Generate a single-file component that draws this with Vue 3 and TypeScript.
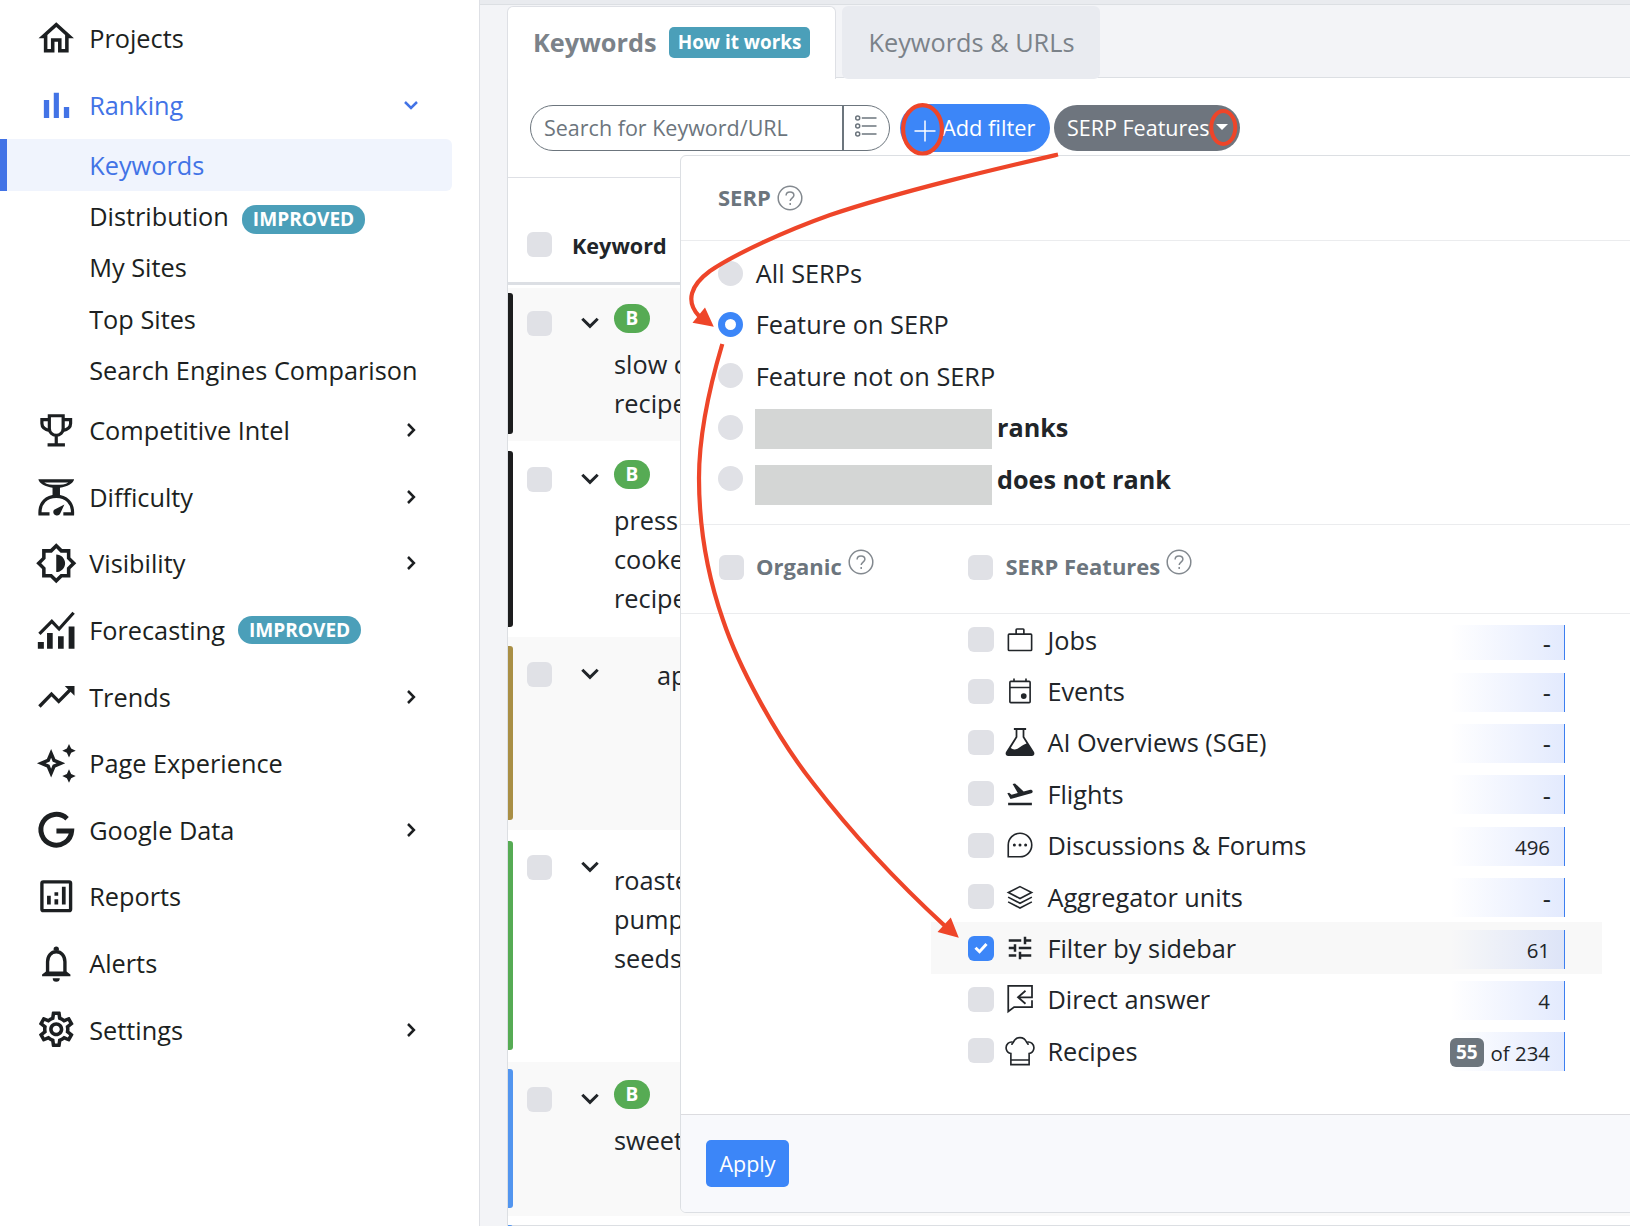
<script setup lang="ts">
interface NavItem {
  label: string
  icon: string
  arrow?: boolean
  badge?: string
}
interface Keyword {
  color: string
  height: number
  barTop: number
  barHeight: number
  checkTop: number
  textTop: number
  badge: boolean
  indent: number
  lines: string[]
}
interface Feature {
  label: string
  icon: string
  value: string
  part?: string
  checked?: boolean
}

const navTop: NavItem[] = [{ label: 'Projects', icon: 'home' }]
const subItems = [
  { label: 'Keywords', active: true, badge: '' },
  { label: 'Distribution', active: false, badge: 'IMPROVED' },
  { label: 'My Sites', active: false, badge: '' },
  { label: 'Top Sites', active: false, badge: '' },
  { label: 'Search Engines Comparison', active: false, badge: '' },
]
const navBottom: NavItem[] = [
  { label: 'Competitive Intel', icon: 'trophy', arrow: true },
  { label: 'Difficulty', icon: 'scale', arrow: true },
  { label: 'Visibility', icon: 'visibility', arrow: true },
  { label: 'Forecasting', icon: 'forecast', badge: 'IMPROVED' },
  { label: 'Trends', icon: 'trend', arrow: true },
  { label: 'Page Experience', icon: 'sparkle' },
  { label: 'Google Data', icon: 'google', arrow: true },
  { label: 'Reports', icon: 'report' },
  { label: 'Alerts', icon: 'bell' },
  { label: 'Settings', icon: 'gear', arrow: true },
]

// Each icon is a list of 24-unit shapes: filled paths and stroked paths.
const icons: Record<string, { fill?: string; stroke?: string; width?: number }> = {
  home: { fill: 'M12 5.69l5 4.5V18h-2v-6H9v6H7v-7.81l5-4.5M12 3L2 12h3v8h6v-6h2v6h6v-8h3L12 3z' },
  bars: { fill: 'M5 9h3v10.200H5zM10.600 5h2.900v14.200h-2.900zM16.300 13h3v6.200h-3z' },
  trophy: {
    stroke: 'M8.100 3.800h7.800v7.200a3.900 3.900 0 0 1-7.800 0zM8 6H3.900v2.200c0 2 1.700 3.500 4.600 4.100M16 6h4.100v2.200c0 2-1.700 3.500-4.600 4.100M12 15v5M7.100 20.300h9.800',
    width: 1.8,
  },
  scale: {
    fill: 'M1.900 1.800h20.200c-.4 2.300-4 4.200-8 4.900v4.700H9.900V6.700c-4-.7-7.600-2.600-8-4.900zM5.200 3.600c1.500 1 4 1.400 6.800 1.400s5.300-.4 6.800-1.400zM16.600 16.100l-2.300 5c-.5 1.200-1.600 1.500-2.600 1.100-1.400-.6-1.800-2-.9-3.100z',
    stroke: 'M8.200 21.400H2.800c-.3-6.300 3.700-9.900 9.200-9.900s9.500 3.600 9.200 9.900h-5.200',
    width: 1.8,
  },
  visibility: {
    fill: 'M20 8.690V4h-4.690L12 .69 8.690 4H4v4.690L.69 12 4 15.310V20h4.690L12 23.310 15.310 20H20v-4.690L23.310 12 20 8.690zm-2 5.790V18h-3.520L12 20.480 9.520 18H6v-3.520L3.520 12 6 9.520V6h3.520L12 3.520 14.480 6H18v3.520L20.480 12 18 14.480zM12 7v10c2.760 0 5-2.240 5-5s-2.240-5-5-5z',
  },
  forecast: {
    fill: 'M1.600 18.600H5v3.900H1.600zM6.800 13.500H10v9H6.800zM13 15.400h3.200v7.100H13zM19 9.900h3.300v12.600H19z',
    stroke: 'M2.500 14l7-7 4.100 4.300 8.200-9.200',
    width: 1.8,
  },
  trend: {
    fill: 'M16.800 6.200h5.500v5.500z',
    stroke: 'M2.500 17.800l6.800-7 4.100 4.100 7.200-7.300',
    width: 1.9,
  },
  sparkle: {
    fill: 'M9.100 4l2.400 5.600L17.100 12l-5.600 2.400L9.100 20l-2.400-5.600L1.100 12l5.600-2.400zM9.100 8.900L8.200 11.100 6 12l2.200.9.9 2.200.9-2.200 2.200-.9-2.200-.9zM19.200 1.100l1.200 2.600 2.600 1.200-2.600 1.200-1.200 2.600-1.200-2.600-2.600-1.200 2.600-1.200zM19.200 15.400l1.200 2.600 2.600 1.200-2.600 1.200-1.200 2.600-1.200-2.600-2.600-1.200 2.600-1.200z',
  },
  google: { stroke: 'M18.100 5.500A8.700 8.700 0 1 0 20.700 12.400H12.100', width: 2.8 },
  report: {
    fill: 'M6.800 11.700h2.100v5H6.800zM11 9.800h2.100v1.900H11zM11 13.700h2.100v3H11zM15.200 6.600h2.100v10.100h-2.100z',
    stroke: 'M4.700 3.900h14.600q.8 0 .8.8v14.600q0 .8-.8.8H4.700q-.8 0-.8-.8V4.700q0-.8.8-.8z',
    width: 1.9,
  },
  bell: {
    fill: 'M10.500 4.600V4a1.500 1.500 0 0 1 3 0v.8zM4 18.400l2.200-1.800h11.600l2.200 1.800v1H4zM10 20.500h4a2 2 0 0 1-4 0z',
    stroke: 'M7.100 18v-6.800c0-3.400 2-5.700 4.900-5.700s4.900 2.300 4.900 5.700V18',
    width: 1.9,
  },
  gear: {
    fill: 'M19.430 12.980c.04-.32.07-.64.07-.98 0-.34-.03-.66-.07-.98l2.110-1.650c.19-.15.24-.42.12-.64l-2-3.460c-.09-.16-.26-.25-.44-.25-.06 0-.12.010-.17.030l-2.490 1c-.52-.4-1.080-.73-1.690-.98l-.38-2.650C14.460 2.180 14.250 2 14 2h-4c-.25 0-.46.18-.49.42l-.38 2.650c-.61.25-1.170.59-1.690.98l-2.490-1c-.06-.02-.12-.03-.18-.03-.17 0-.34.09-.43.25l-2 3.460c-.13.22-.07.49.12.64l2.110 1.650c-.04.32-.07.65-.07.98 0 .33.030.66.070.98l-2.110 1.650c-.19.15-.24.42-.12.64l2 3.460c.09.16.26.25.44.25.06 0 .12-.01.17-.03l2.490-1c.52.4 1.080.73 1.690.98l.38 2.650c.03.24.24.42.49.42h4c.25 0 .46-.18.49-.42l.38-2.650c.61-.25 1.170-.59 1.690-.98l2.490 1c.06.020.12.030.18.030.17 0 .34-.09.43-.25l2-3.460c.12-.22.070-.49-.12-.64l-2.110-1.650zm-1.980-1.710c.04.31.05.52.05.73 0 .21-.02.43-.05.73l-.14 1.130.89.7 1.080.84-.7 1.210-1.270-.51-1.040-.42-.9.68c-.43.32-.84.56-1.250.73l-1.060.43-.16 1.130-.2 1.350h-1.400l-.19-1.350-.16-1.130-1.060-.43c-.43-.18-.83-.41-1.230-.71l-.91-.7-1.060.43-1.270.51-.7-1.210 1.080-.84.89-.7-.14-1.130c-.03-.31-.05-.54-.05-.74s.02-.43.05-.73l.14-1.130-.89-.7-1.080-.84.7-1.210 1.270.51 1.040.42.9-.68c.43-.32.84-.56 1.250-.73l1.060-.43.16-1.130.2-1.350h1.390l.19 1.350.16 1.130 1.060.43c.43.18.83.41 1.230.71l.91.7 1.060-.43 1.270-.51.7 1.210-1.070.85-.89.7.14 1.130zM12 8c-2.210 0-4 1.790-4 4s1.790 4 4 4 4-1.790 4-4-1.790-4-4-4zm0 6c-1.100 0-2-.9-2-2s.9-2 2-2 2 .9 2 2-.9 2-2 2z',
  },
  jobs: {
    stroke: 'M3.400 7.300h17.200q.7 0 .7.7v11.700q0 .7-.7.7H3.400q-.7 0-.7-.7V8q0-.7.7-.7zM8.900 7.300V3.800q0-.6.6-.6h5q.6 0 .6.6v3.500',
    width: 1.3,
  },
  events: {
    fill: 'M15 13.700a2.300 2.300 0 1 1 0 4.600a2.300 2.300 0 1 1 0-4.600z',
    stroke: 'M4.700 4.300h14.600q.8 0 .8.8v15.400q0 .8-.8.8H4.700q-.8 0-.8-.8V5.100q0-.8.8-.8zM4 9.200h16M7.200 2v2.300M16.800 2v2.300',
    width: 1.3,
  },
  flask: {
    fill: 'M7.100.8h9.800v1.600h-1.400v5.400l7.500 11.800c1.100 1.900.3 3.600-1.500 3.600h-19c-1.800 0-2.600-1.700-1.500-3.600L8.500 7.800V2.400H7.100zM9.900 2.400v5.800l-5.300 8.600c1.500 1.300 3.400 1.500 5.400.5 2.600-1.300 4.500-3.500 7.200-4.200l-3.100-4.900V2.400z',
  },
  flight: {
    fill: 'M2.500 19h19v2h-19zm19.570-9.360c-.21-.8-1.040-1.280-1.840-1.060L14.920 10l-6.900-6.430-1.930.51 4.140 7.170-4.970 1.330-1.970-1.540-1.450.39 2.590 4.490L21 11.490c.81-.23 1.280-1.050 1.070-1.850z',
  },
  chat: {
    fill: 'M7.500 10.800a1.200 1.200 0 1 1 0 2.400a1.200 1.200 0 1 1 0-2.400zM12 10.800a1.200 1.200 0 1 1 0 2.400a1.200 1.200 0 1 1 0-2.400zM16.500 10.800a1.200 1.200 0 1 1 0 2.400a1.200 1.200 0 1 1 0-2.400z',
    stroke: 'M2.600 21.400V12A9.400 9.400 0 1 1 12 21.400z',
    width: 1.3,
  },
  layers: {
    stroke: 'M12 3.700l9.300 4.700-9.300 4.800-9.300-4.800zM2.500 12.100l9.500 4.900 9.500-4.900M2.500 15.900l9.500 4.900 9.500-4.900',
    width: 1.3,
  },
  tune: {
    fill: 'M3 17v2h6v-2H3zM3 5v2h10V5H3zm10 16v-2h8v-2h-8v-2h-2v6h2zM7 9v2H3v2h4v2h2V9H7zm14 4v-2H11v2h10zm-6-4h2V7h4V5h-4V3h-2v6z',
  },
  answer: {
    stroke: 'M21.600 13v5.500H7.300L2.600 22V1.500h19v9.100H10.800M16.400 5.400l-6 5.200 6 5.200',
    width: 1.4,
  },
  chef: {
    stroke: 'M4.700 22.900V14C.6 13.300-.2 8.300 2.400 5.900 3.700 4.700 5.300 4.600 6.700 5 7.700 2.700 9.600 1.300 12 1.300S16.300 2.700 17.300 5c1.400-.4 3-.3 4.300.9 2.600 2.400 1.800 7.400-2.300 8.100v8.900zM4.700 19.200h14.600M6.700 5c-.8.600-1.200 1.200-1.300 2.100M17.300 5c.8.600 1.200 1.200 1.300 2.100',
    width: 1.3,
  },
}

const keywords: Keyword[] = [
  { color: '#1c1d1e', height: 153, barTop: 5, barHeight: 141, checkTop: 23, textTop: 57, badge: true, indent: 0, lines: ['slow c', 'recipe'] },
  { color: '#1c1d1e', height: 196, barTop: 10, barHeight: 176, checkTop: 26, textTop: 60, badge: true, indent: 0, lines: ['pressu', 'cooke', 'recipe'] },
  { color: '#a98f45', height: 193, barTop: 9, barHeight: 174, checkTop: 25, textTop: 19, badge: false, indent: 43, lines: ['ap'] },
  { color: '#56ab54', height: 232, barTop: 11, barHeight: 209, checkTop: 25, textTop: 30.5, badge: false, indent: 0, lines: ['roaste', 'pump', 'seeds'] },
  { color: '#5295ef', height: 154, barTop: 7, barHeight: 139, checkTop: 25, textTop: 59, badge: true, indent: 0, lines: ['sweet'] },
  { color: '#5295ef', height: 154, barTop: 9, barHeight: 139, checkTop: 25, textTop: 59, badge: false, indent: 0, lines: [] },
]

const serpOptions = [
  { label: 'All SERPs', redacted: false, on: false, shift: 0 },
  { label: 'Feature on SERP', redacted: false, on: true, shift: 0 },
  { label: 'Feature not on SERP', redacted: false, on: false, shift: 0 },
  { label: 'ranks', redacted: true, on: false, shift: 4 },
  { label: 'does not rank', redacted: true, on: false, shift: 12 },
]

const features: Feature[] = [
  { label: 'Jobs', icon: 'jobs', value: '-' },
  { label: 'Events', icon: 'events', value: '-' },
  { label: 'AI Overviews (SGE)', icon: 'flask', value: '-' },
  { label: 'Flights', icon: 'flight', value: '-' },
  { label: 'Discussions & Forums', icon: 'chat', value: '496' },
  { label: 'Aggregator units', icon: 'layers', value: '-' },
  { label: 'Filter by sidebar', icon: 'tune', value: '61', checked: true },
  { label: 'Direct answer', icon: 'answer', value: '4' },
  { label: 'Recipes', icon: 'chef', value: 'of 234', part: '55' },
]
</script>

<template>
  <div class="app">
    <aside class="sidebar">
      <a v-for="n in navTop" :key="n.label" class="nav-item">
        <svg class="nav-icon" viewBox="0 0 24 24"><path :d="icons[n.icon].fill" fill="currentColor" /></svg>
        <span>{{ n.label }}</span>
      </a>
      <a class="nav-item open">
        <svg class="nav-icon" viewBox="0 0 24 24"><path :d="icons.bars.fill" fill="currentColor" /></svg>
        <span>Ranking</span>
        <svg class="nav-arrow" viewBox="0 0 18 18"><path d="M3 6l6 5.900L15 6" /></svg>
      </a>
      <div class="sub-list">
        <a v-for="s in subItems" :key="s.label" class="sub-item" :class="{ active: s.active }">
          <span>{{ s.label }}</span>
          <span v-if="s.badge" class="pill sub-pill">{{ s.badge }}</span>
        </a>
      </div>
      <a v-for="n in navBottom" :key="n.label" class="nav-item">
        <svg class="nav-icon" viewBox="0 0 24 24">
          <path v-if="icons[n.icon].fill" :d="icons[n.icon].fill" fill="currentColor" fill-rule="evenodd" />
          <path v-if="icons[n.icon].stroke" :d="icons[n.icon].stroke" fill="none" stroke="currentColor" :stroke-width="icons[n.icon].width" />
        </svg>
        <span>{{ n.label }}</span>
        <span v-if="n.badge" class="pill">{{ n.badge }}</span>
        <svg v-if="n.arrow" class="nav-arrow" viewBox="0 0 18 18"><path d="M6 3l5.900 6L6 15" /></svg>
      </a>
    </aside>

    <main class="main">
      <div class="strip"></div>
      <div class="tabs">
        <div class="tab current">
          <span>Keywords</span>
          <span class="how">How it works</span>
        </div>
        <div class="tab">Keywords &amp; URLs</div>
      </div>

      <section class="card">
        <div class="toolbar">
          <div class="search">
            <span class="search-text">Search for Keyword/URL</span>
            <span class="search-opts">
              <svg width="24" height="24" viewBox="0 0 24 24" fill="none" stroke="#6c757d" stroke-width="1.500">
                <circle cx="3.700" cy="4" r="2" /><circle cx="3.700" cy="12" r="2" /><circle cx="3.700" cy="20" r="2" />
                <path d="M7.800 4H22.500M7.800 12H22.500M7.800 20H22.500" />
              </svg>
            </span>
          </div>
          <button class="add">
            <svg width="22" height="22" viewBox="0 0 22 22"><path d="M11 .5v21M.5 11h21" stroke="#fff" stroke-width="1.500" /></svg>
            <span>Add filter</span>
          </button>
          <button class="serp-btn">
            <span>SERP Features</span>
            <i class="caret"></i>
          </button>
        </div>

        <div class="thead">
          <i class="check"></i>
          <span>Keyword</span>
        </div>
        <div
          v-for="(k, i) in keywords"
          :key="i"
          class="row"
          :class="{ odd: i % 2 === 0 && i < 5 }"
          :style="{ height: k.height + 'px' }"
        >
          <i class="bar" :style="{ background: k.color, height: k.barHeight + 'px', marginTop: k.barTop + 'px' }"></i>
          <i class="check" :style="{ marginTop: k.checkTop + 'px' }"></i>
          <svg class="chev" width="20" height="14" viewBox="0 0 20 14" :style="{ marginTop: k.checkTop + 4.500 + 'px' }">
            <path d="M2.300 2.800L10 10.300l7.700-7.500" fill="none" stroke="#212529" stroke-width="3" />
          </svg>
          <div class="words" :style="{ paddingTop: (k.badge ? k.checkTop - 7 : k.textTop) + 'px', paddingLeft: k.indent + 'px' }">
            <span v-if="k.badge" class="b-badge" :style="{ marginBottom: k.textTop - k.checkTop - 21.500 + 'px' }">B</span>
            <span v-for="l in k.lines" :key="l" class="line">{{ l }}</span>
          </div>
        </div>
      </section>
    </main>

    <section class="menu">
      <header class="menu-head">
        <span>SERP</span>
        <svg class="help" viewBox="0 0 26 26"><circle cx="13" cy="13" r="11.800" /><path d="M9.100 10.500c0-2.200 1.700-3.600 3.900-3.600s3.900 1.400 3.900 3.400c0 2.700-3.700 3-3.700 5.700M13.200 18.100v2" /></svg>
      </header>

      <div class="options">
        <div v-for="o in serpOptions" :key="o.label" class="option">
          <i class="radio" :class="{ on: o.on }"></i>
          <i v-if="o.redacted" class="redact" :style="{ marginTop: o.shift + 'px' }"></i>
          <b v-if="o.redacted">{{ o.label }}</b>
          <span v-else>{{ o.label }}</span>
        </div>
      </div>

      <div class="groups">
        <div class="group organic">
          <i class="check"></i>
          <span>Organic</span>
          <svg class="help" viewBox="0 0 26 26"><circle cx="13" cy="13" r="11.800" /><path d="M9.100 10.500c0-2.200 1.700-3.600 3.900-3.600s3.900 1.400 3.900 3.400c0 2.700-3.700 3-3.700 5.700M13.200 18.100v2" /></svg>
        </div>
        <div class="group">
          <i class="check"></i>
          <span>SERP Features</span>
          <svg class="help" viewBox="0 0 26 26"><circle cx="13" cy="13" r="11.800" /><path d="M9.100 10.500c0-2.200 1.700-3.600 3.900-3.600s3.900 1.400 3.900 3.400c0 2.700-3.700 3-3.700 5.700M13.200 18.100v2" /></svg>
        </div>
      </div>

      <div class="features">
        <div v-for="(f, i) in features" :key="f.label" class="feature" :class="{ selected: f.checked }">
          <i class="check" :class="{ on: f.checked }">
            <svg v-if="f.checked" width="14" height="12" viewBox="0 0 14 12"><path d="M1.500 5.800l4 3.900L12.500 2" fill="none" stroke="#fff" stroke-width="3" /></svg>
          </i>
          <svg class="f-icon" viewBox="0 0 24 24">
            <path v-if="icons[f.icon].fill" :d="icons[f.icon].fill" fill="currentColor" fill-rule="evenodd" />
            <path v-if="icons[f.icon].stroke" :d="icons[f.icon].stroke" fill="none" stroke="currentColor" :stroke-width="icons[f.icon].width" />
          </svg>
          <span class="f-label">{{ f.label }}</span>
          <span class="count" :class="{ first: i === 0, dash: f.value === '-' }">
            <b v-if="f.part" class="part">{{ f.part }}</b>
            <span>{{ f.value }}</span>
          </span>
        </div>
      </div>

      <footer class="menu-foot">
        <button class="apply">Apply</button>
      </footer>
    </section>

    <svg class="marks" viewBox="0 0 1630 1226" fill="none" stroke="#ee4529">
      <path d="M1058 154.500C1000 168 905 190 830 215C785 231 735 254 710 271C691 285 685 301 699 316" stroke-width="4.200" />
      <path d="M722.300 344C708 392 699 437 699 478C699 527 708 577 723 620C738 665 775 735 813 783C850 831 895 880 945 926" stroke-width="4.200" />
      <path d="M713.800 326.800L705 307.600L692.500 322.800zM958.800 937.800L950.800 917.500L937.500 932z" fill="#ee4529" stroke="none" />
      <ellipse cx="922.500" cy="129.300" rx="19.400" ry="24.200" stroke-width="4.200" />
      <ellipse cx="1223.300" cy="127.500" rx="12" ry="16.500" stroke-width="4" />
    </svg>
  </div>
</template>

<style>
html,
body {
  margin: 0;
  overflow: hidden;
}
</style>

<style scoped>
.app {
  position: relative;
  display: flex;
  width: 1630px;
  height: 1226px;
  overflow: hidden;
  background: #fff;
  color: #212529;
  font-family: 'Open Sans', 'Noto Sans', sans-serif;
  font-size: 25.3px;
  white-space: nowrap;
}
.app * {
  box-sizing: border-box;
}
i {
  display: block;
  flex: none;
}
button {
  border: 0;
  padding: 0;
  font: inherit;
  color: #fff;
}

/* Sidebar */
.sidebar {
  width: 480px;
  flex: none;
  padding-top: 4.8px;
  border-right: 1px solid #dee0e5;
  color: #1c1f21;
}
.nav-item {
  display: flex;
  align-items: center;
  height: 66.6px;
  padding: 0 59.5px 0 34.5px;
}
.nav-item.open {
  height: 67.6px;
  color: #4273e6;
}
.nav-icon {
  width: 42.5px;
  height: 42.5px;
  margin-right: 12.2px;
}
.nav-arrow {
  width: 18px;
  height: 18px;
  margin-left: auto;
  fill: none;
  stroke: currentColor;
  stroke-width: 2.5;
}
.sub-list {
  height: 258px;
}
.sub-item {
  display: flex;
  align-items: center;
  width: 452px;
  height: 51.3px;
  padding-left: 89.2px;
}
.sub-item.active {
  height: 52px;
  margin-bottom: -0.5px;
  padding-left: 82.2px;
  border-left: 7px solid #4273e6;
  border-radius: 0 6px 6px 0;
  background: #f0f4fd;
  color: #4273e6;
}
.pill {
  height: 28px;
  margin-left: 13px;
  padding: 0 11px;
  border-radius: 14px;
  background: #4b9fb9;
  color: #fff;
  font-size: 19.1px;
  font-weight: 700;
  line-height: 28px;
}
.sub-pill {
  height: 29px;
  margin-top: 6px;
}

/* Tabs and table */
.main {
  flex: 1;
  display: flex;
  flex-direction: column;
  background: #f3f4f7;
}
.strip {
  height: 5px;
  flex: none;
  background: #e9ebef;
  border-bottom: 1px solid #dcdfe3;
}
.tabs {
  display: flex;
  height: 72px;
  flex: none;
  margin-left: 27px;
  padding-top: 1px;
  color: #7b8289;
}
.tab {
  position: relative;
  display: flex;
  align-items: center;
  width: 258px;
  height: 73px;
  padding: 0 0 2px 26.5px;
  border-radius: 6px;
  background: #e9ebf0;
}
.tab.current {
  width: 329px;
  margin-right: 6px;
  padding-left: 25px;
  border: 1px solid #dee0e5;
  border-bottom: 0;
  border-radius: 6px 6px 0 0;
  background: #fff;
  font-weight: 700;
}
.how {
  height: 31px;
  margin-left: 12.2px;
  margin-top: 1px;
  padding: 0 9px;
  border-radius: 5px;
  background: #4b9fb9;
  color: #fff;
  font-size: 18.9px;
  line-height: 30px;
}
.card {
  flex: 1;
  margin-left: 27px;
  border: 1px solid #dcdfe3;
  border-right: 0;
  background: #fff;
  min-height: 0;
}
.toolbar {
  display: flex;
  align-items: center;
  height: 100px;
  padding-left: 22px;
  border-bottom: 1px solid #dee0e5;
  font-size: 21.6px;
}
.search {
  display: flex;
  width: 360px;
  height: 46px;
  border: 1px solid #6c757d;
  border-radius: 23px;
  color: #6c757d;
}
.search-text {
  width: 313px;
  padding-left: 13px;
  border-right: 2px solid #6c757d;
  font-size: 21.5px;
  line-height: 43px;
}
.search-opts {
  display: flex;
  align-items: center;
  padding: 0 0 3px 10px;
}
.add {
  display: flex;
  align-items: center;
  width: 150px;
  height: 48px;
  margin-left: 10px;
  padding: 0 0 1px 14px;
  border-radius: 24px;
  background: #3c86f8;
}
.add svg {
  margin: 7px 6px 0 0;
}
.add span {
  font-size: 21.8px;
}
.serp-btn {
  display: flex;
  align-items: center;
  width: 186px;
  height: 46px;
  margin-left: 4px;
  padding: 0 0 1px 13px;
  border-radius: 23px;
  background: #6e757e;
}
.serp-btn span {
  font-size: 21.5px;
}
.caret {
  margin: 0 0 0 6px;
  border: 6px solid transparent;
  border-top-color: #fff;
  border-bottom: 0;
}
.check {
  width: 25px;
  height: 25px;
  border-radius: 6px;
  background: #e0e1e6;
}
.thead {
  display: flex;
  align-items: center;
  height: 106.5px;
  padding: 31px 0 0 19px;
  border-bottom: 3px solid #dcdfe4;
  font-size: 21.6px;
  font-weight: 700;
}
.thead .check {
  margin: -1px 20px 0 0;
}
.row {
  display: flex;
  align-items: flex-start;
}
.thead + .row {
  margin-top: 3.5px;
}
.odd {
  background: #f9f9f9;
}
.bar {
  width: 5px;
  border-radius: 0 3px 3px 0;
}
.row .check {
  margin-left: 14px;
}
.chev {
  flex: none;
  margin-left: 28px;
}
.words {
  display: flex;
  flex-direction: column;
  align-items: flex-start;
  margin-left: 14px;
}
.b-badge {
  width: 36px;
  height: 28.500px;
  border-radius: 15px;
  background: #56ab54;
  color: #fff;
  font-size: 19px;
  font-weight: 700;
  line-height: 28px;
  text-align: center;
}
.line {
  height: 39px;
  line-height: 39px;
}

/* Filter menu */
.menu {
  position: absolute;
  left: 680px;
  top: 155px;
  width: 980px;
  height: 1058px;
  border: 1px solid #dcdfe3;
  border-radius: 6px;
  overflow: hidden;
  background: #fff;
  display: flex;
  flex-direction: column;
}
.menu-head {
  display: flex;
  align-items: center;
  height: 85px;
  padding: 0 0 2px 37px;
  border-bottom: 1px solid #ebecee;
  color: #6c757d;
  font-size: 22px;
  font-weight: 700;
}
.help {
  width: 26px;
  height: 26px;
  margin-left: 6.500px;
  fill: none;
  stroke: #83898f;
  stroke-width: 1.5;
}
.menu-head .help {
  margin-top: 1.500px;
}
.options {
  height: 284px;
  padding: 6.400px 0 0 37px;
  border-bottom: 1px solid #ebecee;
}
.option {
  display: flex;
  align-items: center;
  height: 51.4px;
}
.option span {
  padding-left: 12.800px;
}
.option b {
  font-size: 25.2px;
}
.radio {
  width: 25px;
  height: 25px;
  border-radius: 50%;
  background: #e0e1e6;
}
.radio.on {
  border: 7.500px solid #3c86f8;
  background: #fff;
}
.redact {
  width: 237px;
  height: 40px;
  margin: 0 5px 0 12px;
  background: #d4d6d5;
}
.groups {
  display: flex;
  height: 89px;
  padding-left: 37.500px;
  border-bottom: 1px solid #ebecee;
  color: #6c757d;
  font-size: 22px;
  font-weight: 700;
}
.group {
  display: flex;
  align-items: center;
  padding-bottom: 6.500px;
}
.group .check {
  margin: 4px 12.500px 0 0;
}
.group .help {
  margin-top: -7px;
  margin-left: 6px;
}
.organic {
  width: 249.500px;
}
.features {
  flex: 1;
  padding: 0 0 0 250px;
}
.feature {
  display: flex;
  align-items: center;
  width: 671px;
  height: 51.4px;
  padding-left: 37px;
}
.feature.selected {
  background: #f8f8f8;
}
.check.on {
  display: flex;
  align-items: center;
  justify-content: center;
  background: #3c86f8;
}
.feature .check {
  width: 26px;
}
.f-icon {
  width: 30px;
  height: 30px;
  margin: 0 12px 0 11.400px;
}
.count {
  display: flex;
  align-items: center;
  justify-content: flex-end;
  width: 115px;
  height: 39px;
  margin: 2px 37.500px 0 auto;
  padding: 2px 13.500px 0 0;
  border-right: 1px solid #3c7ef0;
  background: linear-gradient(90deg, rgba(60, 110, 245, 0), rgba(60, 110, 245, 0.145));
  font-size: 20.4px;
}
.count.first {
  height: 35px;
  margin-top: 6px;
  padding-top: 0;
}
.count.dash {
  padding: 0 12.500px 0 0;
  font-size: 25.3px;
}
.part {
  width: 37px;
  height: 29px;
  margin-right: 6.500px;
  border-radius: 6px;
  background: #6c757d;
  color: #fff;
  font-size: 19px;
  line-height: 28px;
  text-align: center;
}
.menu-foot {
  height: 98px;
  padding: 25px 0 0 25px;
  border-top: 1px solid #dcdce0;
  background: #f8f9fc;
}
.apply {
  display: block;
  width: 83px;
  height: 47px;
  border-radius: 5px;
  background: #3c86f8;
  font-size: 21.5px;
}

/* Annotation arrows and rings */
.marks {
  position: absolute;
  left: 0;
  top: 0;
  width: 1630px;
  height: 1226px;
}
</style>
